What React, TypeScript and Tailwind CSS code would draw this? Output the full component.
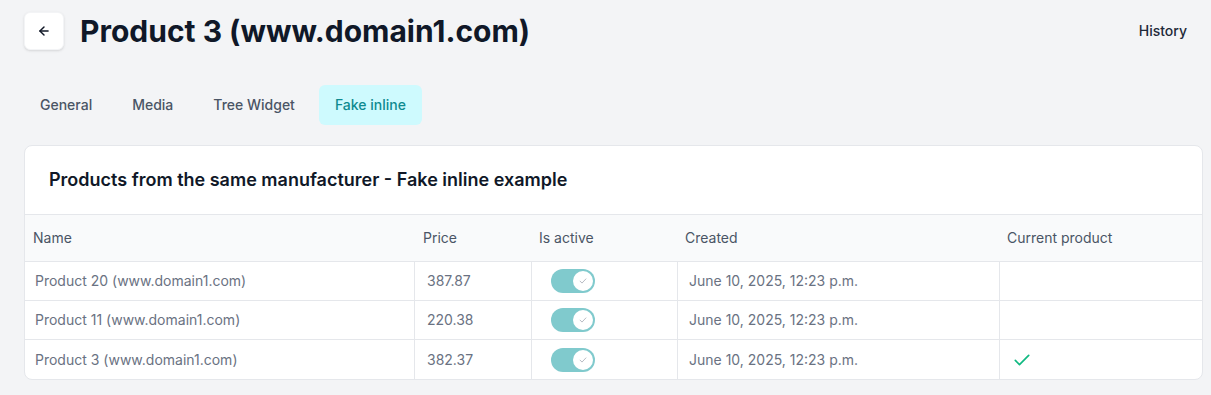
import React from 'react';

const rows = [
  { name: 'Product 20 (www.domain1.com)', price: '387.87', created: 'June 10, 2025, 12:23 p.m.', current: false },
  { name: 'Product 11 (www.domain1.com)', price: '220.38', created: 'June 10, 2025, 12:23 p.m.', current: false },
  { name: 'Product 3 (www.domain1.com)', price: '382.37', created: 'June 10, 2025, 12:23 p.m.', current: true },
];

const tabs = ['General', 'Media', 'Tree Widget', 'Fake inline'];

const cols = 'grid grid-cols-[389px_117px_146px_322px_1fr]';

const Toggle = () => (
  <span className="relative inline-flex h-6 w-11 items-center rounded-full bg-[#80cacd]">
    <span className="absolute right-0.5 flex h-5 w-5 items-center justify-center rounded-full bg-white">
      <svg width="10" height="10" viewBox="0 0 12 12" fill="none">
        <path d="M2.5 6.2l2.3 2.3L9.5 3.5" stroke="#b8bcc4" strokeWidth="1.2" strokeLinecap="round" strokeLinejoin="round" />
      </svg>
    </span>
  </span>
);

export default function App() {
  return (
    <div className="min-h-[395px] bg-[#f3f4f6] pl-6 pr-2 pt-3 font-['Inter',sans-serif]">
      <div className="flex h-[38px] items-center justify-between">
        <div className="flex items-center gap-4">
          <button className="flex h-[38px] w-10 items-center justify-center rounded-md border border-gray-100 bg-white shadow-sm">
            <svg width="14" height="14" viewBox="0 0 24 24" fill="none" stroke="#111827" strokeWidth="2.5" strokeLinecap="round" strokeLinejoin="round">
              <path d="M19 12H5" />
              <path d="M12 19l-7-7 7-7" />
            </svg>
          </button>
          <h1 className="text-[30px] font-bold leading-9 tracking-normal text-gray-900">Product 3 (www.domain1.com)</h1>
        </div>
        <button className="px-4 text-sm font-medium text-gray-800">History</button>
      </div>

      <div className="mt-[35px] flex gap-2">
        {tabs.map((t) => (
          <button
            key={t}
            className={
              t === 'Fake inline'
                ? 'rounded-md bg-cyan-100 px-4 py-2.5 text-sm font-medium leading-5 text-[#0e8a90]'
                : 'rounded-md px-4 py-2.5 text-sm font-medium leading-5 text-gray-600'
            }
          >
            {t}
          </button>
        ))}
      </div>

      <div className="mt-5 overflow-hidden rounded-lg border border-gray-200 bg-white">
        <div className="border-b border-gray-200 px-6 py-5">
          <h2 className="text-lg font-semibold leading-7 text-gray-900">Products from the same manufacturer - Fake inline example</h2>
        </div>
        <div className={`${cols} h-[47px] items-center border-b border-gray-200 bg-gray-50 text-sm text-gray-600`}>
          <div className="pl-2">Name</div>
          <div className="pl-[9px]">Price</div>
          <div className="pl-2">Is active</div>
          <div className="pl-2">Created</div>
          <div className="pl-2">Current product</div>
        </div>
        {rows.map((r, i) => (
          <div key={r.name} className={`${cols} h-[39px] text-sm text-gray-500 ${i < rows.length - 1 ? 'border-b border-gray-200' : ''}`}>
            <div className="flex items-center pl-2.5">{r.name}</div>
            <div className="flex items-center border-l border-gray-200 pl-3">{r.price}</div>
            <div className="flex items-center border-l border-gray-200 pl-[19px]">
              <Toggle />
            </div>
            <div className="flex items-center border-l border-gray-200 pl-[11px]">{r.created}</div>
            <div className="flex items-center border-l border-gray-200 pl-3">
              {r.current && (
                <svg width="20" height="20" viewBox="0 0 24 24" fill="none" stroke="#10b981" strokeWidth="2" strokeLinecap="round" strokeLinejoin="round">
                  <path d="M4 12.5l5 5L20 6.5" />
                </svg>
              )}
            </div>
          </div>
        ))}
      </div>
    </div>
  );
}
